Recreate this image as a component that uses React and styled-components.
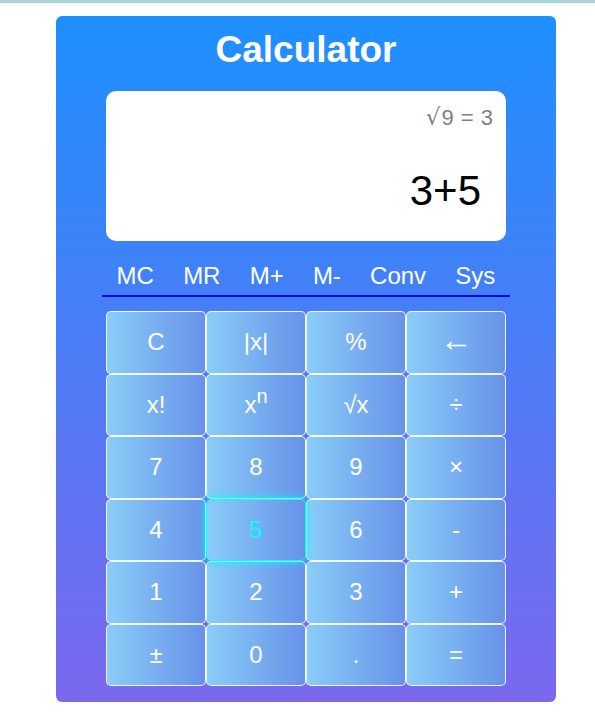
import React from 'react';
import styled, { createGlobalStyle } from 'styled-components';

const GlobalStyle = createGlobalStyle`
  html {
    border-top: 3px solid #a8d5d9;
    background: #ffffff;
  }
  body {
    margin: 0;
    font-family: "Liberation Sans", Arial, sans-serif;
  }
`;

const Card = styled.div`
  width: 500px;
  margin: 13px 0 0 56px;
  padding: 13px 50px 16px;
  box-sizing: border-box;
  border-radius: 6px;
  background: linear-gradient(to bottom, #1e90ff, #7b68ee);
  display: flex;
  flex-direction: column;
`;

const Title = styled.h1`
  margin: 0;
  color: #ffffff;
  font-size: 37px;
  font-weight: 700;
  text-align: center;
  line-height: 42px;
`;

const Display = styled.div`
  margin-top: 20px;
  height: 150px;
  box-sizing: border-box;
  padding: 14px 13px 26px;
  background: #ffffff;
  border-radius: 10px;
  display: flex;
  flex-direction: column;
  justify-content: space-between;
  align-items: flex-end;
`;

const History = styled.div`
  color: #808080;
  font-size: 22px;
  line-height: 24px;
  word-spacing: 1px;
`;

const Radical = styled.span`
  font-family: "DejaVu Sans", sans-serif;
  font-size: 23px;
  margin-right: 1px;
`;

const Current = styled.div`
  color: #000000;
  font-size: 42px;
  line-height: 48px;
  padding-right: 12px;
`;

const MemoryRow = styled.div`
  margin: 21px -4px 0;
  padding-bottom: 5px;
  border-bottom: 2px solid #0000ee;
  display: flex;
  justify-content: space-around;
`;

const MemoryButton = styled.button`
  background: none;
  border: none;
  padding: 0;
  color: #ffffff;
  font-family: inherit;
  font-size: 24px;
  line-height: 28px;
  cursor: pointer;
`;

const Keypad = styled.div`
  margin-top: 14px;
  display: grid;
  grid-template-columns: repeat(4, 100px);
  grid-auto-rows: 62.5px;
`;

const Key = styled.button`
  box-sizing: border-box;
  border: 1px solid ${p => (p.active ? '#00ffff' : 'rgba(255, 255, 255, 0.9)')};
  border-radius: 5px;
  background: linear-gradient(to right, #8acdf8, #6792e9);
  color: ${p => (p.active ? '#00ffff' : '#ffffff')};
  box-shadow: ${p => (p.active ? '0 0 10px #00ffff' : 'none')};
  font-family: inherit;
  font-size: ${p => (p.large ? '33px' : '24px')};
  padding: 0 0 ${p => (p.large ? '5px' : '0')};
  cursor: pointer;
  position: relative;
  z-index: ${p => (p.active ? 1 : 0)};

  sup {
    font-size: 20px;
    vertical-align: 10px;
    line-height: 0;
  }
`;

const memory = ['MC', 'MR', 'M+', 'M-', 'Conv', 'Sys'];

const keys = [
  'C', '|x|', '%', '\u2190',
  'x!', 'xn', '\u221Ax', '\u00F7',
  '7', '8', '9', '\u00D7',
  '4', '5', '6', '-',
  '1', '2', '3', '+',
  '\u00B1', '0', '.', '=',
];

export default function App() {
  return (
    <>
      <GlobalStyle />
      <Card>
        <Title>Calculator</Title>
        <Display>
          <History><Radical>√</Radical>9 = 3</History>
          <Current>3+5</Current>
        </Display>
        <MemoryRow>
          {memory.map(m => (
            <MemoryButton key={m}>{m}</MemoryButton>
          ))}
        </MemoryRow>
        <Keypad>
          {keys.map(k => (
            <Key key={k} active={k === '5'} large={k === '\u2190'}>
              {k === 'xn' ? <>x<sup>n</sup></> : k}
            </Key>
          ))}
        </Keypad>
      </Card>
    </>
  );
}
